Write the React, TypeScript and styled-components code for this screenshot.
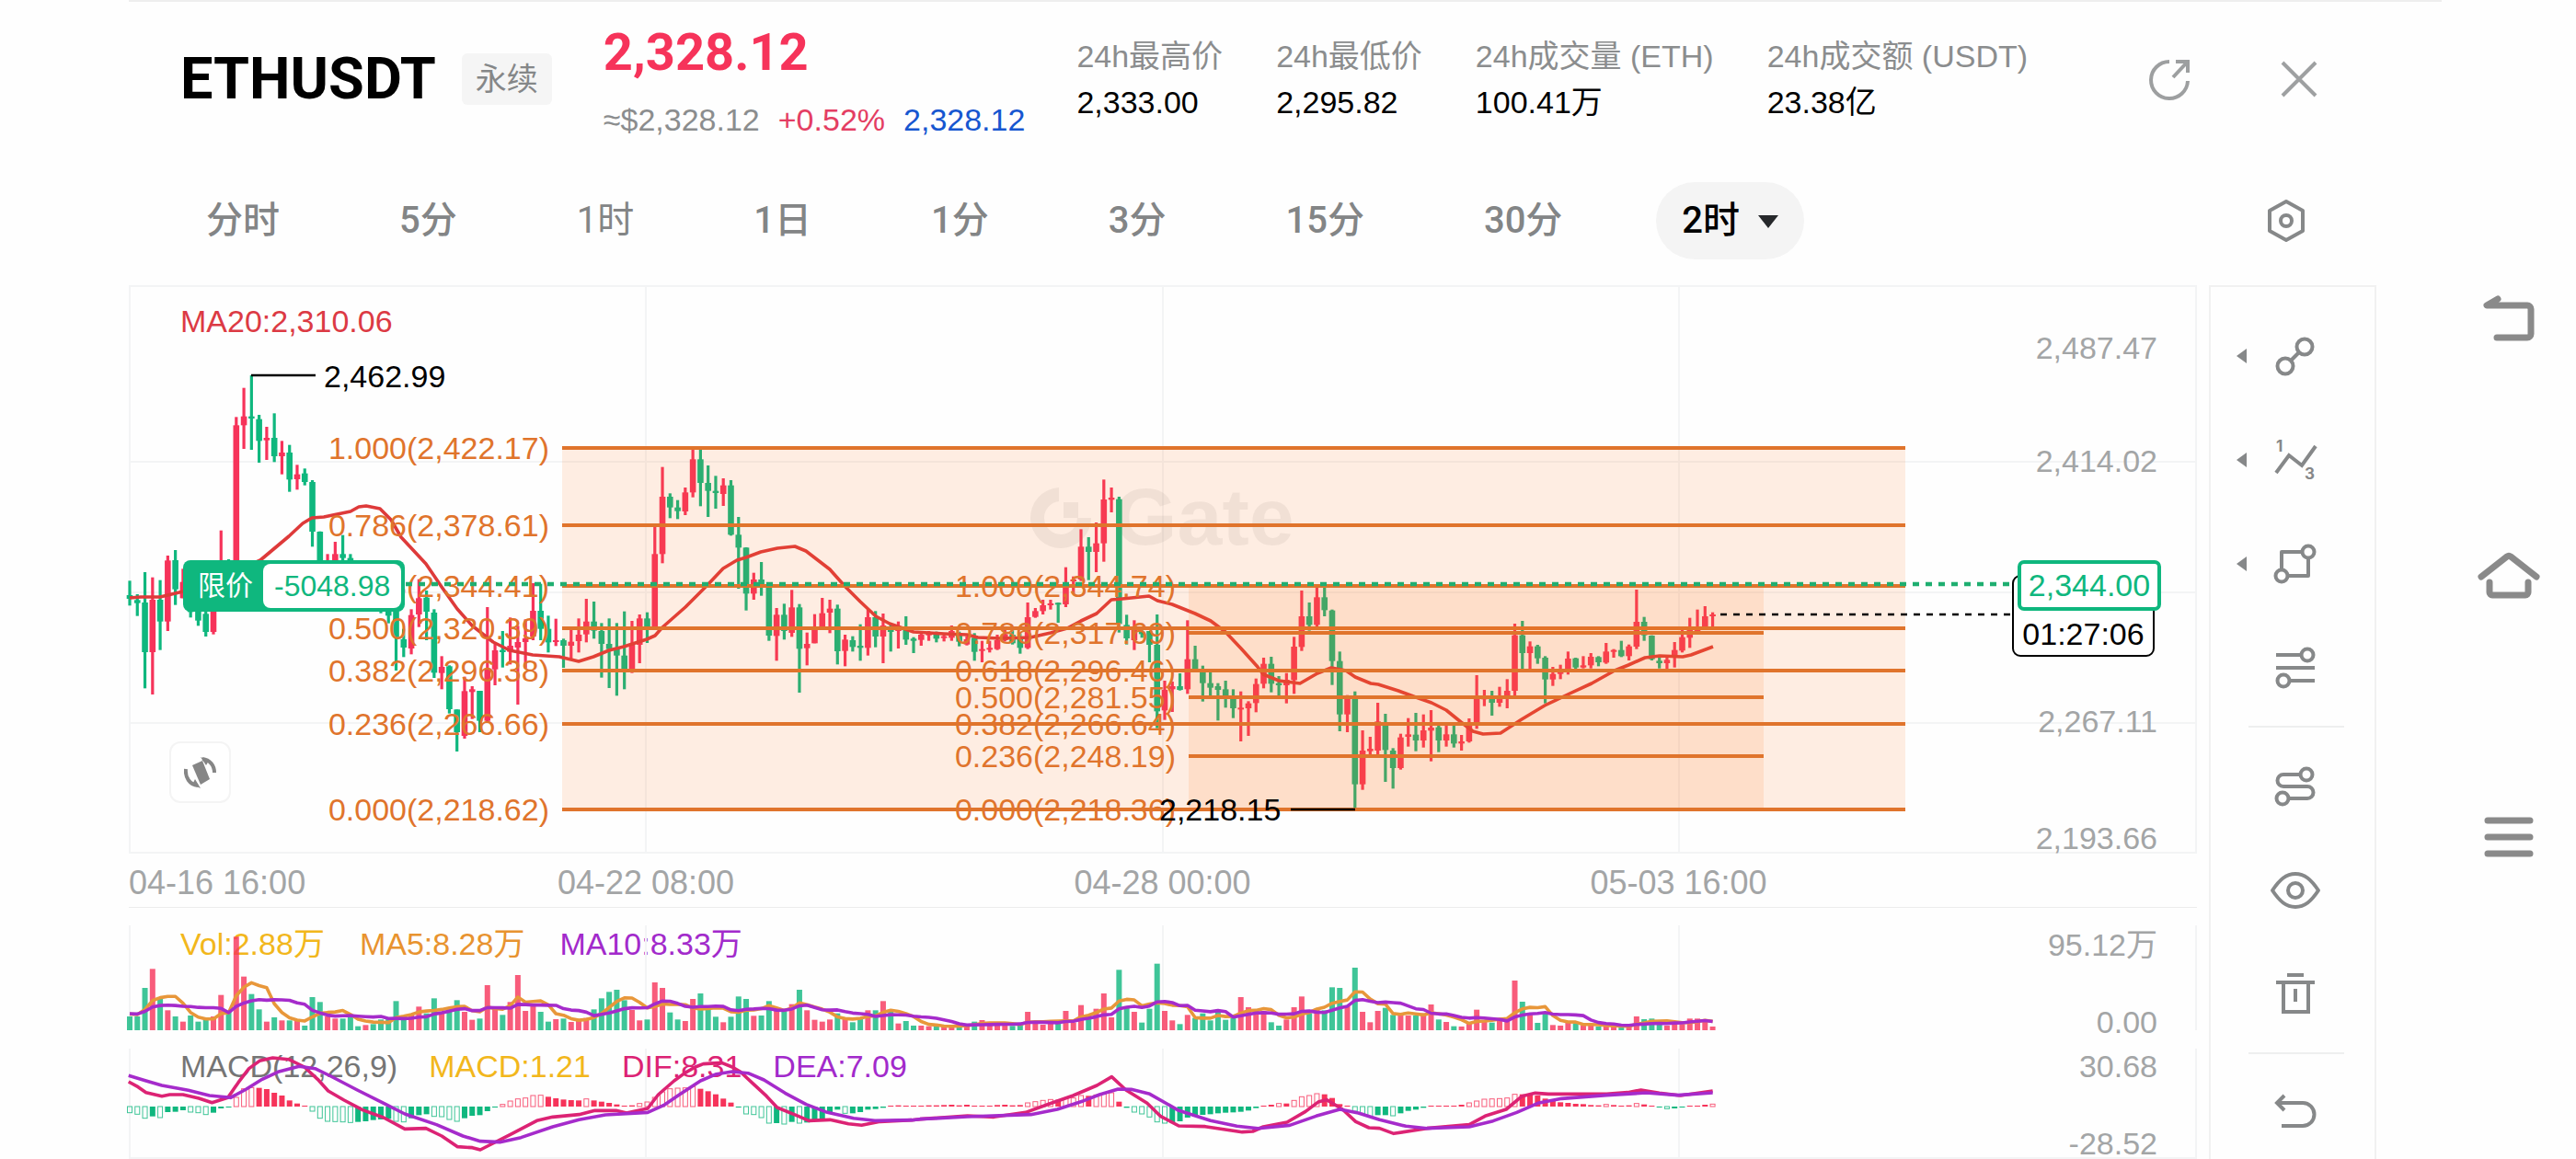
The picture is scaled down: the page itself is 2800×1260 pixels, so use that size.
import React from "react";
import styled, { createGlobalStyle } from "styled-components";

const UP = "#f6335a";
const DOWN = "#0fb77e";
const ORANGE = "#e0742c";
const GRID = "#f3f4f5";
const AXIS = "#a3a5a6";
const SANS = `"Liberation Sans", "Noto Sans CJK SC", sans-serif`;
const MEDIUM = `Roboto, "Noto Sans CJK SC", sans-serif`;

/* ---------- market data ---------- */

/* direction (r rising, g falling), high, body top, body bottom, low; in ticks below the 440 line */
const CANDLES = `g 574 621 633 655|g 618 637 647 689|g 546 645 807 925|r 563 636 807 945|g 572 636 707 800|r 492 508 707 738
g 474 507 602 653|r 535 578 631 631|g 596 621 676 694|g 633 658 704 721|g 658 682 741 756|r 633 658 741 749
r 410 507 658 664|g 504 547 621 658|r 40 67 645 658|r -55 38 67 144|g -96 38 45 147|g 33 47 118 189
r 72 108 116 180|g 28 108 168 187|r 118 156 168 227|g 131 156 244 284|r 196 227 243 277|g 208 224 252 263
g 246 252 414 463|g 413 414 560 572|r 487 507 560 584|r 447 487 560 570|g 425 487 500 560|g 487 500 560 584
g 510 547 621 645|r 530 560 620 640|g 540 570 630 650|g 560 590 640 680|g 560 621 688 713|g 633 670 758 867
g 731 765 792 823|r 667 686 795 814|r 569 631 684 725|g 606 629 675 768|g 667 678 874 891|r 820 855 875 928
g 850 853 993 1007|g 994 994 1068 1131|r 887 934 1080 1089|r 918 928 937 1025|g 933 933 1031 1068|r 660 863 1031 1035
r 774 801 863 915|g 738 800 807 857|r 694 786 806 847|r 721 774 792 978|r 700 762 774 860|r 582 672 756 768
g 584 672 731 768|g 688 731 775 808|r 698 768 773 787|g 763 768 786 858|r 735 773 786 830|r 697 750 771 808
r 633 707 749 775|g 642 707 737 763|g 712 738 780 890|g 697 780 797 924|g 712 796 818 949|g 674 818 861 928
r 705 782 873 875|r 684 697 783 843|g 677 697 723 777|r 395 487 725 735|r 203 300 487 517|g 289 300 335 370
g 311 335 347 373|r 270 286 348 360|r 145 178 286 302|g 145 178 255 331|g 198 255 281 366|g 232 281 288 339
r 240 263 291 330|g 246 263 424 427|g 366 424 466 600|g 465 466 616 671|r 548 570 616 636|g 513 570 597 623
g 590 597 753 770|r 663 685 754 835|g 649 685 738 766|r 604 661 744 757|g 650 661 796 939|r 743 780 794 850
r 683 728 778 778|r 630 680 728 728|r 636 665 678 745|g 652 665 804 847|r 750 766 803 853|g 755 768 790 805
g 716 786 793 835|r 668 693 793 818|g 673 693 756 791|r 681 720 756 843|g 718 735 740 805|r 707 730 738 795
g 690 730 766 783|g 758 763 770 810|r 745 750 767 786|r 738 745 752 770|g 740 748 763 775|r 745 755 760 772
r 720 738 760 770|g 740 745 773 788|r 755 765 782 785|g 745 760 806 835|r 770 797 803 840|r 770 793 799 808
r 750 768 797 800|r 735 748 768 772|g 735 750 778 782|g 745 760 793 812|r 645 693 793 797|r 663 673 692 695
r 636 654 673 684|r 636 648 654 668|g 645 646 652 711|r 530 590 651 660|r 560 570 576 615|r 406 463 570 575
g 432 463 480 572|r 384 452 480 546|r 244 309 452 512|r 270 303 310 351|g 300 308 715 743|g 685 718 762 782
r 703 728 768 800|g 728 740 748 760|g 738 738 783 840|g 684 783 1000 1055|r 900 930 997 1028|r 903 918 928 1002
g 876 918 930 932|r 703 830 928 943|g 786 830 862 868|g 851 868 908 968|g 870 908 923 950|g 908 918 930 1030
g 900 928 950 988|g 928 948 990 1022|r 935 988 994 1098|r 967 974 990 1080|r 893 911 973 1003|r 825 845 910 925
g 822 845 910 938|g 885 908 915 948|r 875 897 915 974|r 757 789 898 943|r 606 690 790 803|g 645 690 718 737
r 588 628 718 725|g 590 628 670 690|g 668 671 836 914|g 805 836 1010 1065|r 947 958 1010 1068|g 935 948 1238 1315
r 1062 1128 1238 1256|r 1083 1122 1130 1145|r 972 1033 1128 1142|g 1008 1035 1126 1230|g 1120 1128 1185 1252|r 1073 1085 1185 1190
r 1022 1075 1083 1115|g 1005 1076 1095 1130|r 1010 1062 1095 1118|r 996 1053 1063 1163|g 1045 1052 1095 1133|r 1045 1075 1095 1115
g 1045 1075 1105 1118|r 1077 1098 1105 1128|r 1023 1042 1098 1102|r 882 955 1043 1057|r 930 955 960 983|g 933 953 972 1014
r 920 950 972 985|r 895 933 957 990|r 714 752 933 948|g 705 752 810 862|r 772 788 810 862|g 783 788 827 845
g 820 825 896 974|r 855 878 896 917|r 848 865 878 895|r 805 828 868 880|g 825 827 857 862|r 820 850 857 860
r 810 822 850 860|g 820 823 840 853|r 777 805 841 845|r 797 800 806 825|g 770 800 820 823|r 782 788 820 834
r 603 708 789 797|g 692 708 752 770|g 752 753 830 834|g 820 835 843 860|r 825 832 843 862|r 774 800 825 857
r 725 758 802 808|r 695 730 760 793|r 668 727 738 738|r 657 690 727 728|r 677 684 690 727`
  .split(/[|\n]/)
  .map((row) => {
    const [dir, ...v] = row.split(" ");
    const [high, top, bottom, low] = v.map(Number);
    return { up: dir === "r", high, top, bottom, low };
  });

const VOLUMES = [
  45, 45, 138, 200, 103, 65, 45, 28, 48, 28, 35, 45, 115, 62, 305, 175, 118, 68, 28, 42, 32, 32, 30, 15, 108, 92, 45, 38,
  38, 45, 13, 17, 20, 35, 40, 95, 38, 48, 77, 55, 104, 55, 72, 98, 60, 34, 38, 147, 73, 50, 92, 180, 63, 83, 60, 28, 36,
  38, 27, 34, 40, 68, 104, 125, 132, 98, 66, 32, 35, 156, 138, 58, 35, 30, 102, 120, 68, 44, 26, 44, 110, 102, 47, 48, 95,
  72, 62, 85, 132, 65, 34, 28, 35, 55, 38, 26, 40, 65, 65, 95, 60, 22, 30, 15, 15, 13, 12, 12, 12, 20, 18, 28, 33, 22, 20,
  18, 14, 20, 60, 25, 18, 22, 26, 63, 25, 82, 48, 70, 120, 42, 197, 75, 60, 25, 70, 217, 63, 32, 20, 50, 40, 55, 32, 62,
  34, 42, 108, 75, 65, 62, 26, 15, 35, 75, 110, 55, 70, 65, 140, 138, 80, 204, 60, 26, 63, 73, 50, 48, 48, 48, 55, 84, 35,
  27, 13, 12, 25, 67, 32, 25, 30, 38, 162, 93, 50, 24, 55, 17, 15, 24, 22, 15, 18, 12, 14, 12, 14, 12, 45, 36, 38, 20, 15,
  30, 20, 38, 38, 36, 12,
];

const HISTOGRAM = [
  -20, -25, -38, -32, -36, -18, -17, -12, -18, -20, -26, -20, -6, -1, 30, 58, 62, 61, 57, 45, 36, 20, 10, 1, -15, -38, -48,
  -49, -50, -52, -50, -48, -44, -42, -40, -48, -50, -38, -28, -25, -32, -33, -42, -48, -38, -30, -28, -15, -1, 7, 18, 25,
  28, 36, 37, 32, 27, 23, 21, 20, 25, 20, 16, 12, 7, 0, 4, 10, 15, 30, 48, 58, 60, 61, 66, 58, 50, 40, 26, 13, -1, -24,
  -26, -36, -54, -54, -57, -50, -54, -52, -46, -40, -18, -10, -22, -22, -18, -10, -8, -4, 0, 4, 1, 1, 3, 4, 4, 5, 6, 4, 6,
  1, 1, 1, 5, 6, 4, 5, 12, 16, 20, 23, 22, 26, 28, 36, 35, 38, 42, 45, 16, -4, -18, -24, -34, -50, -54, -52, -48, -36,
  -30, -27, -25, -22, -20, -19, -17, -13, -5, 3, 6, 10, 10, 20, 32, 36, 42, 40, 28, 8, 0, -15, -22, -34, -28, -28, -30,
  -22, -14, -10, -4, 0, 3, 3, 3, 6, 12, 18, 24, 25, 26, 28, 40, 40, 40, 36, 26, 22, 14, 12, 9, 8, 5, 4, 7, 5, 3, 4, 10, 7,
  1, -3, -7, -6, -3, 0, 1, 6, 8,
];

const MA20 =
  "141,650 153,649 174,649 199,643 245,626 283,609 314,583 329,569 339,563 352,562 381,556 390,551 398,550 413,553 425,565 436,584 463,613 480,638 497,662 513,680 536,698 554,707 579,712 608,714 629,719 645,714 662,707 678,703 703,695 712,691 720,682 745,660 768,637 786,618 801,609 811,606 827,600 845,596 864,594 876,599 902,619 918,637 935,654 952,670 967,678 993,687 1026,689 1051,690 1063,693 1087,694 1120,693 1142,688 1160,683 1175,675 1192,667 1208,652 1220,651 1249,648 1258,653 1274,657 1299,667 1316,675 1332,687 1349,705 1367,725 1373,733 1390,740 1413,743 1432,732 1447,726 1463,729 1473,736 1490,743 1498,744 1520,751 1539,758 1556,764 1572,772 1588,785 1601,795 1612,798 1631,797 1654,782 1679,767 1704,755 1730,743 1755,729 1770,723 1788,715 1804,713 1829,714 1838,712 1862,703";

/* MACD curves in two stretches, each with its own start on the time axis */
const DIF_EARLY =
  "17,738 35,755 50,773 80,785 95,780 120,780 150,792 175,806 205,790 225,740 245,695 265,670 290,660 320,665 350,690 375,730 395,768 425,798 460,830 500,855 540,892 580,890 610,915 640,950 668,953 683,960 700,945 740,910 790,865 820,853 870,845 900,832 940,832 960,840 1000,825 1020,780 1050,735 1070,710 1090,690 1105,680 1140,676 1160,690 1175,705 1200,745 1225,785 1245,822 1285,850 1305,865 1345,862 1380,875 1405,880 1440,868 1500,863";
const DIF_LATE =
  "0,860 90,849 140,853 200,838 245,810 290,783 335,750 363,722 390,765 430,808 455,850 490,882 540,884 610,902 630,900 650,885 695,870 730,835 755,803 770,797 800,828 825,868 850,888 870,890 897,907 960,890 1040,878 1070,850 1110,828 1140,785 1165,775 1190,778 1300,778 1340,773 1365,765 1400,775 1440,783 1501,768";
const DEA_EARLY =
  "17,718 50,735 80,750 130,766 170,783 210,790 240,762 270,730 300,706 340,688 370,695 400,720 450,765 500,808 540,843 600,878 650,915 683,932 720,935 760,920 820,885 870,862 920,846 1000,838 1030,815 1060,780 1100,735 1130,713 1160,705 1190,710 1220,732 1260,775 1300,812 1340,838 1390,857 1430,865 1500,863";
const DEA_LATE =
  "0,860 90,852 210,845 260,828 310,800 340,780 375,762 400,763 435,778 490,832 550,865 600,883 640,890 700,880 750,850 795,828 830,840 870,862 920,883 960,890 1040,885 1085,866 1130,838 1170,808 1215,793 1300,782 1375,774 1435,782 1501,774";

/* ---------- chart scales ---------- */

const FIRST_X = 141;
const PITCH = 8.272;
const VOLUME_BASE = 1120;
const MACD_BASE = 1203;
const GRID_X = [702, 1264, 1825];

const barX = (i: number) => FIRST_X + PITCH * i;
const priceY = (ticks: number) => 440 + ticks / 3;

const average = (values: number[], span: number) =>
  values
    .map((_, i) => {
      let sum = 0;
      for (let k = i - span + 1; k <= i; k++) sum += k < 0 ? 55 : values[k];
      return `${barX(i)},${VOLUME_BASE - sum / span / 3}`;
    })
    .join(" ");

const stretch = (points: string, startX: number) =>
  points
    .split(" ")
    .map((p) => {
      const [x, y] = p.split(",").map(Number);
      return `${startX + x / 1.742},${930 + y / 3}`;
    })
    .join(" ");

const FIB_MAIN = [
  { y: 487, label: "1.000(2,422.17)" },
  { y: 571, label: "0.786(2,378.61)" },
  { y: 637, label: "0.618(2,344.41)" },
  { y: 683, label: "0.500(2,320.39)" },
  { y: 729, label: "0.382(2,296.38)" },
  { y: 787, label: "0.236(2,266.66)" },
  { y: 880, label: "0.000(2,218.62)" },
];
const FIB_INNER = [
  { y: 637, label: "1.000(2,344.74)" },
  { y: 688, label: "0.786(2,317.69)" },
  { y: 729, label: "0.618(2,296.46)" },
  { y: 758, label: "0.500(2,281.55)" },
  { y: 787, label: "0.382(2,266.64)" },
  { y: 822, label: "0.236(2,248.19)" },
  { y: 880, label: "0.000(2,218.36)" },
];

/* ---------- styles ---------- */

const GlobalStyle = createGlobalStyle`
  * { box-sizing: border-box; }
  body { margin: 0; background: #fefefe; font-family: ${SANS}; color: #000; }
  button { border: 0; padding: 0; background: none; color: inherit; font: inherit; cursor: pointer; }
`;

const Page = styled.div`
  display: grid;
  grid-template-columns: minmax(0, 1fr) 146px;
  min-height: 100vh;
  padding-left: 140px;
`;

const Screen = styled.main`
  display: flex;
  flex-direction: column;
  min-width: 0;
`;

const Header = styled.header`
  display: flex;
  align-items: center;
  gap: 56px;
  padding: 17px 123px 17px 56px;
  border-top: 2px solid #eeeeee;
  white-space: nowrap;
`;

const Symbol = styled.div`
  display: flex;
  align-items: center;
  gap: 28px;
`;

const Title = styled.h1`
  margin: 0;
  font: 700 63px/72px ${MEDIUM};
`;

const Tag = styled.span`
  padding: 0 15px;
  border-radius: 6px;
  background: #f5f5f5;
  color: #858788;
  font-size: 34px;
  line-height: 56px;
`;

const PriceBlock = styled.div`
  display: flex;
  flex-direction: column;
  gap: 20px;
  margin-top: 8px;
`;

const LastPrice = styled.strong`
  color: ${UP};
  font: 700 56px/60px ${MEDIUM};
`;

const SubPrices = styled.div`
  display: flex;
  gap: 20px;
  font-size: 34px;
  line-height: 46px;
`;

const Tinted = styled.span<{ $color: string }>`
  color: ${(p) => p.$color};
`;

const Stats = styled.dl`
  display: flex;
  gap: 58px;
  margin: 0;
  font-size: 34px;
  line-height: 50px;
`;

const StatName = styled.dt`
  color: #8b8d8e;
`;

const StatValue = styled.dd`
  margin: 0;
`;

const HeaderActions = styled.div`
  display: flex;
  gap: 76px;
  margin-left: auto;
`;

const IconButton = styled.button`
  display: grid;
  place-items: center;
  width: 64px;
  height: 64px;
  color: #868889;
`;

const TabBar = styled.nav`
  display: flex;
  align-items: center;
  gap: 74px;
  height: 140px;
  padding: 0 137px 0 56px;
`;

const Tab = styled.button<{ $active?: boolean; $light?: boolean }>`
  display: flex;
  align-items: center;
  gap: 20px;
  height: 84px;
  padding: 0 28px;
  border-radius: 42px;
  background: ${(p) => (p.$active ? "#f4f4f4" : "transparent")};
  color: ${(p) => (p.$active ? "#000" : "#838586")};
  font: ${(p) => (p.$light ? 400 : 500)} 40px/56px ${MEDIUM};
  white-space: nowrap;
`;

const SettingsSlot = styled.div`
  margin-left: auto;
`;

const Workspace = styled.section`
  display: grid;
  grid-template-columns: minmax(0, 1fr) 182px;
  gap: 13px;
  padding-right: 71px;
`;

const Charts = styled.div`
  min-width: 0;
`;

const Pane = styled.div<{ $height: number }>`
  position: relative;
  height: ${(p) => p.$height}px;
`;

const Plot = styled.svg`
  position: relative;
  display: block;
  width: 100%;
  height: 100%;
  overflow: visible;
  font-family: ${SANS};
  font-size: 34px;
`;

const Legend = styled.div<{ $gap: number }>`
  position: absolute;
  top: 17px;
  left: 56px;
  display: flex;
  gap: ${(p) => p.$gap}px;
  font-size: 34px;
  line-height: 44px;
  white-space: nowrap;
`;

const Dates = styled.div`
  display: grid;
  grid-template-columns: 281fr 562fr 561fr 561fr 283fr;
  padding-top: 5px;
  border-bottom: 1px solid #ececec;
  color: ${AXIS};
  font-size: 36px;
  line-height: 53px;
  white-space: nowrap;
`;

const DateLabel = styled.time<{ $first?: boolean }>`
  text-align: ${(p) => (p.$first ? "left" : "center")};
`;

const OrderTag = styled.button`
  position: absolute;
  top: 299px;
  left: 59px;
  display: flex;
  align-items: center;
  padding: 4px;
  border-radius: 8px;
  background: ${DOWN};
  color: #fff;
  font-size: 30px;
  line-height: 48px;
`;

const OrderKind = styled.span`
  padding: 0 11px 0 12px;
`;

const OrderPnl = styled.span`
  padding: 0 12px;
  border-radius: 8px;
  background: #fff;
  color: ${DOWN};
  font-size: 32px;
`;

const Countdown = styled.div`
  position: absolute;
  top: 315px;
  right: 46px;
  width: 155px;
  padding-top: 40px;
  border: 2px solid #000;
  border-radius: 9px;
  background: #fff;
  font-size: 34px;
  line-height: 45px;
  text-align: center;
`;

const PriceTag = styled.div`
  position: absolute;
  top: 299px;
  right: 39px;
  width: 156px;
  border: 4px solid ${DOWN};
  border-radius: 7px;
  background: #fff;
  color: ${DOWN};
  font-size: 34px;
  line-height: 47px;
  text-align: center;
`;

const RotateButton = styled.button`
  position: absolute;
  left: 44px;
  bottom: 55px;
  display: grid;
  place-items: center;
  width: 67px;
  height: 67px;
  border: 2px solid #f4f4f4;
  border-radius: 12px;
  background: #fff;
  color: #868686;
`;

const Tools = styled.aside`
  display: flex;
  flex-direction: column;
  align-items: stretch;
  height: 0;
  min-height: 100%;
  overflow: hidden;
  padding-top: 18px;
  border: 2px solid #f1f1f1;
  border-bottom: 0;
`;

const Tool = styled.button`
  display: grid;
  grid-template-columns: 12px 56px;
  align-items: center;
  gap: 24px;
  flex: none;
  height: 113px;
  padding-left: 28px;
  color: #868889;
`;

const ToolIcon = styled.span`
  grid-column: 2;
  display: grid;
`;

const Divider = styled.hr`
  flex: none;
  width: 104px;
  height: 2px;
  margin: 7px 0 7px 41px;
  border: 0;
  background: #eeefef;
`;

const SystemBar = styled.nav`
  position: sticky;
  top: 0;
  display: flex;
  flex-direction: column;
  align-items: center;
  justify-content: center;
  gap: 202px;
  height: 100vh;
`;

const SystemButton = styled.button`
  display: grid;
  place-items: center;
  width: 80px;
  height: 80px;
  color: #8a8a8a;
`;

/* ---------- icons ---------- */

const Icon = ({ size = 56, weight = 4, children }: { size?: number; weight?: number; children: React.ReactNode }) => (
  <svg
    width={size}
    height={size}
    viewBox={`0 0 ${size} ${size}`}
    fill="none"
    stroke="currentColor"
    strokeWidth={weight}
    aria-hidden="true"
  >
    {children}
  </svg>
);

const LineIcon = () => (
  <Icon>
    <circle cx="38" cy="18" r="8.5" />
    <circle cx="17" cy="39" r="8.5" />
    <path d="M32 24 23 33" />
  </Icon>
);

const WaveIcon = () => (
  <Icon>
    <path d="M7 42 21 23l14 11 15-21" />
    <g fill="currentColor" stroke="none" fontSize="17" fontWeight="700" fontFamily="Inter, sans-serif">
      <text x="7" y="19">1</text>
      <text x="38" y="49">3</text>
    </g>
  </Icon>
);

const ShapeIcon = () => (
  <Icon>
    <path d="M35 15H13v20M20 41h22V22" strokeLinejoin="round" />
    <circle cx="42" cy="15" r="6.5" />
    <circle cx="13" cy="41" r="6.5" />
  </Icon>
);

const LevelsIcon = () => (
  <Icon>
    <path d="M7 14h26M7 28h42M23 42h26" />
    <circle cx="41" cy="14" r="6.5" />
    <circle cx="15" cy="42" r="6.5" />
  </Icon>
);

const PathIcon = () => (
  <Icon>
    <path d="M34 15H15a6.5 6.5 0 0 0 0 13h26a6.5 6.5 0 0 1 0 13H22" />
    <circle cx="40" cy="15" r="6.5" />
    <circle cx="14" cy="41" r="6.5" />
  </Icon>
);

const EyeIcon = () => (
  <Icon>
    <path d="M3 28C11 16 18 10 28 10s17 6 25 18c-8 12-15 18-25 18S11 40 3 28Z" strokeLinejoin="round" />
    <circle cx="28" cy="28" r="8" />
  </Icon>
);

const TrashIcon = () => (
  <Icon>
    <path d="M19 7h18M7 15h42M15 15v32h27V15M28 22v14" />
  </Icon>
);

const UndoIcon = () => (
  <Icon>
    <path d="M16 9 8 17l8 8" />
    <path d="M8 17h28a12 12 0 0 1 0 25H13" />
  </Icon>
);

const TOOLS: { name: string; icon: React.ReactNode; menu?: boolean; divided?: boolean }[] = [
  { name: "线段", icon: <LineIcon />, menu: true },
  { name: "波浪", icon: <WaveIcon />, menu: true },
  { name: "形状", icon: <ShapeIcon />, menu: true },
  { name: "斐波那契", icon: <LevelsIcon />, divided: true },
  { name: "连续画线", icon: <PathIcon /> },
  { name: "显示", icon: <EyeIcon /> },
  { name: "删除", icon: <TrashIcon />, divided: true },
  { name: "撤销", icon: <UndoIcon /> },
];

const TABS = ["分时", "5分", "1时", "1日", "1分", "3分", "15分", "30分"];

const STATS = [
  ["24h最高价", "2,333.00"],
  ["24h最低价", "2,295.82"],
  ["24h成交量 (ETH)", "100.41万"],
  ["24h成交额 (USDT)", "23.38亿"],
];

/* ---------- charts ---------- */

const AxisText = ({ y, children }: { y: number; children: string }) => (
  <text x="2345" y={y + 12} textAnchor="end" fill={AXIS}>
    {children}
  </text>
);

const Retracement = ({ x1, x2, levels }: { x1: number; x2: number; levels: typeof FIB_MAIN }) => (
  <g>
    <rect x={x1} y={levels[0].y} width={x2 - x1} height={levels[6].y - levels[0].y} fill="#fb7316" opacity="0.12" />
    {levels.map((l) => (
      <g key={l.label}>
        <path d={`M${x1} ${l.y}H${x2}`} stroke={ORANGE} strokeWidth="4" />
        <text x={x1 - 14} y={l.y + 12} textAnchor="end" fill={ORANGE}>
          {l.label}
        </text>
      </g>
    ))}
  </g>
);

const PriceChart = () => (
  <Plot viewBox="140 310 2248 618" preserveAspectRatio="xMaxYMid slice" role="img" aria-label="ETHUSDT K线">
    <g stroke={GRID} strokeWidth="2" fill="none">
      <path d="M140 311H2388M140 502H2388M140 644H2388M140 786H2388M140 927H2388M141 310V927M2387 310V927" />
      {GRID_X.map((x) => (
        <path key={x} d={`M${x} 310V927`} />
      ))}
    </g>
    <g fill="#000" opacity="0.05">
      <path d="M1151 530a33 33 0 1 0 35 33h-15a18 18 0 1 1-20-18Z" />
      <path d="M1156 546h16v17h-16Z" />
      <text x="1211" y="592" fontSize="88" fontWeight="700">
        Gate
      </text>
    </g>
    {CANDLES.map((c, i) => (
      <g key={i} fill={c.up ? UP : DOWN}>
        <rect x={barX(i) - 1.6} y={priceY(c.high)} width="3.2" height={(c.low - c.high) / 3} />
        <rect x={barX(i) - 3.3} y={priceY(c.top)} width="6.6" height={Math.max(2, (c.bottom - c.top) / 3)} />
      </g>
    ))}
    <polyline points={MA20} fill="none" stroke="#de3a3a" strokeWidth="3.6" strokeLinejoin="round" />
    <Retracement x1={611} x2={2071} levels={FIB_MAIN} />
    <Retracement x1={1292} x2={1917} levels={FIB_INNER} />
    <path d="M441 635H2192" stroke="#1fae70" strokeWidth="4.5" strokeDasharray="7 7" />
    <path d="M1870 668H2188" stroke="#000" strokeWidth="2.4" strokeDasharray="7 7" />
    <path d="M273 408h70M1403 880h70" stroke="#000" strokeWidth="2.4" />
    <text x="352" y="421">2,462.99</text>
    <text x="1260" y="892">2,218.15</text>
    <AxisText y={378}>2,487.47</AxisText>
    <AxisText y={501}>2,414.02</AxisText>
    <AxisText y={784}>2,267.11</AxisText>
    <AxisText y={911}>2,193.66</AxisText>
  </Plot>
);

const VolumeChart = () => (
  <Plot viewBox="140 987 2248 133" preserveAspectRatio="xMaxYMid slice" role="img" aria-label="成交量">
    <g stroke={GRID} strokeWidth="2">
      {[141, ...GRID_X, 2387].map((x) => (
        <path key={x} d={`M${x} 1006V1120`} />
      ))}
    </g>
    {VOLUMES.map((v, i) => (
      <rect
        key={i}
        x={barX(i) - 3}
        y={VOLUME_BASE - v / 3}
        width="6"
        height={v / 3}
        fill={CANDLES[i].up ? UP : DOWN}
        opacity="0.8"
      />
    ))}
    <g fill="none" strokeWidth="3.6" strokeLinejoin="round">
      <polyline points={average(VOLUMES, 5)} stroke="#e8973a" />
      <polyline points={average(VOLUMES, 10)} stroke="#a52bcb" />
    </g>
    <AxisText y={1027}>95.12万</AxisText>
    <AxisText y={1111}>0.00</AxisText>
  </Plot>
);

const MacdChart = () => (
  <Plot viewBox="140 1120 2248 140" preserveAspectRatio="xMaxYMid slice" role="img" aria-label="MACD">
    <g stroke={GRID} strokeWidth="2">
      {[141, ...GRID_X, 2387].map((x) => (
        <path key={x} d={`M${x} 1140V1258`} />
      ))}
      <path d="M140 1259H2388" />
    </g>
    {HISTOGRAM.map((v, i) => {
      const growing = i === 0 || Math.abs(v) > Math.abs(HISTOGRAM[i - 1]);
      const color = v >= 0 ? UP : DOWN;
      const height = Math.max(1, Math.abs(v) / 3);
      const hollow = growing && height > 2;
      return (
        <rect
          key={i}
          x={barX(i) - (hollow ? 2.5 : 3)}
          y={v >= 0 ? MACD_BASE - height : MACD_BASE}
          width={hollow ? 5 : 6}
          height={height}
          fill={hollow ? "none" : color}
          stroke={hollow ? color : "none"}
          opacity={hollow ? 0.8 : 1}
        />
      );
    })}
    <g fill="none" strokeWidth="3.6" strokeLinejoin="round">
      <polyline points={`${stretch(DIF_EARLY, 130)} ${stretch(DIF_LATE, 1000)}`} stroke="#dc2374" />
      <polyline points={`${stretch(DEA_EARLY, 130)} ${stretch(DEA_LATE, 1000)}`} stroke="#a52bcb" />
    </g>
    <AxisText y={1159}>30.68</AxisText>
    <AxisText y={1243}>-28.52</AxisText>
  </Plot>
);

/* ---------- page ---------- */

export default function App() {
  return (
    <Page>
      <GlobalStyle />
      <Screen>
        <Header>
          <Symbol>
            <Title>ETHUSDT</Title>
            <Tag>永续</Tag>
          </Symbol>
          <PriceBlock>
            <LastPrice>2,328.12</LastPrice>
            <SubPrices>
              <Tinted $color="#8b8d8e">≈$2,328.12</Tinted>
              <Tinted $color="#e43e63">+0.52%</Tinted>
              <Tinted $color="#1656d0">2,328.12</Tinted>
            </SubPrices>
          </PriceBlock>
          <Stats>
            {STATS.map(([name, value]) => (
              <div key={name}>
                <StatName>{name}</StatName>
                <StatValue>{value}</StatValue>
              </div>
            ))}
          </Stats>
          <HeaderActions>
            <IconButton aria-label="分享">
              <Icon size={64}>
                <g opacity="0.8">
                  <path d="M31 13a20 20 0 1 0 20 21" />
                  <path d="M38 13h13v12M50 14 35 30" />
                </g>
              </Icon>
            </IconButton>
            <IconButton aria-label="关闭">
              <Icon size={64}>
                <path d="m14 14 36 36M50 14 14 50" opacity="0.8" />
              </Icon>
            </IconButton>
          </HeaderActions>
        </Header>

        <TabBar>
          {TABS.map((t) => (
            <Tab key={t} $light={t === "1时"}>
              {t}
            </Tab>
          ))}
          <Tab $active aria-haspopup="listbox">
            2时
            <svg width="22" height="15" viewBox="0 0 22 15" aria-hidden="true">
              <path d="M0 1h22L11 15Z" fill="#26282b" />
            </svg>
          </Tab>
          <SettingsSlot>
            <IconButton aria-label="设置">
              <Icon size={64}>
                <path d="M32 11 50 21v22L32 53 14 43V21Z" strokeLinejoin="round" />
                <circle cx="32" cy="32" r="6" />
              </Icon>
            </IconButton>
          </SettingsSlot>
        </TabBar>

        <Workspace>
          <Charts>
            <Pane $height={618}>
              <Legend $gap={38}>
                <Tinted $color="#dc3a44">MA20:2,310.06</Tinted>
              </Legend>
              <PriceChart />
              <OrderTag>
                <OrderKind>限价</OrderKind>
                <OrderPnl>-5048.98</OrderPnl>
              </OrderTag>
              <Countdown>01:27:06</Countdown>
              <PriceTag>2,344.00</PriceTag>
              <RotateButton aria-label="旋转屏幕">
                <svg width="36" height="34" viewBox="0 0 36 34" fill="none" aria-hidden="true">
                  <path d="M9 9 20 4l8 20-10 6Z" fill="currentColor" />
                  <path d="M20 2c8 1 13 7 13 15M2 13c-1 9 4 17 13 18" stroke="currentColor" strokeWidth="4" />
                  <path d="m18 0 9 4-3 5ZM18 34l-9-4 3-6Z" fill="currentColor" />
                </svg>
              </RotateButton>
            </Pane>
            <Dates>
              <DateLabel $first>04-16 16:00</DateLabel>
              <DateLabel>04-22 08:00</DateLabel>
              <DateLabel>04-28 00:00</DateLabel>
              <DateLabel>05-03 16:00</DateLabel>
            </Dates>
            <Pane $height={133}>
              <Legend $gap={38}>
                <Tinted $color="#f2b71c">Vol:2.88万</Tinted>
                <Tinted $color="#e8932f">MA5:8.28万</Tinted>
                <Tinted $color="#a22acb">MA10:8.33万</Tinted>
              </Legend>
              <VolumeChart />
            </Pane>
            <Pane $height={140}>
              <Legend $gap={34}>
                <Tinted $color="#757575">MACD(12,26,9)</Tinted>
                <Tinted $color="#f2b71c">MACD:1.21</Tinted>
                <Tinted $color="#dc2374">DIF:8.31</Tinted>
                <Tinted $color="#a22acb">DEA:7.09</Tinted>
              </Legend>
              <MacdChart />
            </Pane>
          </Charts>

          <Tools>
            {TOOLS.map((t) => (
              <React.Fragment key={t.name}>
                <Tool aria-label={t.name}>
                  {t.menu && (
                    <svg width="12" height="16" viewBox="0 0 12 16" aria-hidden="true">
                      <path d="M11 0v16L0 8Z" fill="currentColor" />
                    </svg>
                  )}
                  <ToolIcon>{t.icon}</ToolIcon>
                </Tool>
                {t.divided && <Divider />}
              </React.Fragment>
            ))}
          </Tools>
        </Workspace>
      </Screen>

      <SystemBar>
        <SystemButton aria-label="返回">
          <Icon size={80} weight={7}>
            <path d="M28 17 16 24H60a4 4 0 0 1 4 4V55a4 4 0 0 1-4 4H27" strokeLinecap="round" strokeLinejoin="round" />
          </Icon>
        </SystemButton>
        <SystemButton aria-label="主页">
          <Icon size={80} weight={7}>
            <path
              d="M10 37 38 15q2-1.500 4 0L70 37M19 43v11a3 3 0 0 0 3 3H58a3 3 0 0 0 3-3V43"
              strokeLinecap="round"
              strokeLinejoin="round"
            />
          </Icon>
        </SystemButton>
        <SystemButton aria-label="最近任务">
          <Icon size={80} weight={7}>
            <path d="M17 20H63M17 38H63M17 56H63" strokeLinecap="round" />
          </Icon>
        </SystemButton>
      </SystemBar>
    </Page>
  );
}
